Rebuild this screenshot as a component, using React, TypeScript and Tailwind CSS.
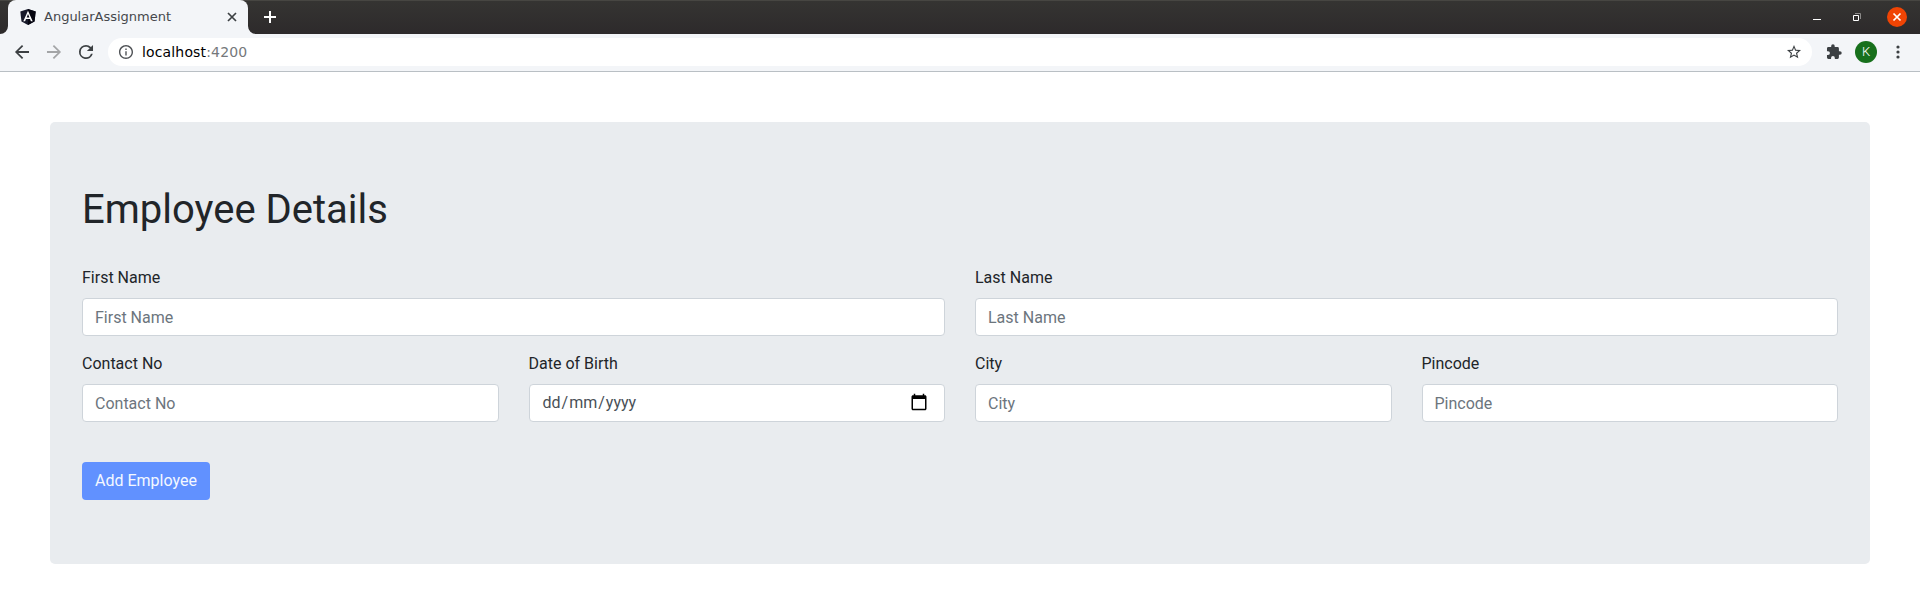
import React from "react";

function AngularLogo() {
  return (
    <svg width="16" height="16" viewBox="0 0 16 16">
      <path d="M8 0 .3 2.600l1.200 9.800L8 16l6.500-3.600 1.200-9.800z" fill="#17192a" />
      <path d="M8 0v16l6.500-3.600 1.200-9.800z" fill="#050510" />
      <path d="M8 1.800 3.300 12.200h1.800l.9-2.300h4l.9 2.300h1.800zm0 3.300 1.400 3.400H6.600z" fill="#fff" />
    </svg>
  );
}

function Icon({ d, className, size = 20, viewBox = "0 0 24 24" }: { d: string; className?: string; size?: number; viewBox?: string }) {
  return (
    <svg width={size} height={size} viewBox={viewBox} fill="currentColor" className={className}>
      <path d={d} />
    </svg>
  );
}

const BACK = "M20 11H7.830l5.590-5.590L12 4l-8 8 8 8 1.410-1.410L7.830 13H20v-2z";
const FORWARD = "M12 4l-1.410 1.410L16.170 11H4v2h12.170l-5.580 5.590L12 20l8-8z";
const RELOAD =
  "M17.650 6.350A7.958 7.958 0 0 0 12 4a8 8 0 1 0 7.730 10h-2.080A6 6 0 1 1 12 6c1.660 0 3.140.690 4.220 1.780L13 11h7V4l-2.350 2.350z";
const INFO =
  "M11 7h2v2h-2zm0 4h2v6h-2zm1-9C6.480 2 2 6.480 2 12s4.480 10 10 10 10-4.480 10-10S17.520 2 12 2zm0 18c-4.410 0-8-3.590-8-8s3.590-8 8-8 8 3.590 8 8-3.590 8-8 8z";
const STAR =
  "M22 9.240l-7.190-.620L12 2 9.190 8.630 2 9.240l5.460 4.730L5.820 21 12 17.270 18.180 21l-1.630-7.030L22 9.240zM12 15.400l-3.760 2.270 1-4.280-3.320-2.880 4.380-.380L12 6.100l1.710 4.040 4.380.380-3.320 2.880 1 4.280L12 15.400z";
const PUZZLE =
  "M20.500 11H19V7a2 2 0 0 0-2-2h-4V3.500a2.500 2.500 0 0 0-5 0V5H4a2 2 0 0 0-1.990 2v3.800H3.500a2.700 2.700 0 0 1 0 5.400H2V20a2 2 0 0 0 2 2h3.800v-1.500a2.700 2.700 0 0 1 5.400 0V22H17a2 2 0 0 0 2-2v-4h1.500a2.500 2.500 0 0 0 0-5z";
const CALENDAR =
  "M20 3h-1V1h-2v2H7V1H5v2H4c-1.100 0-2 .9-2 2v16c0 1.100.9 2 2 2h16c1.100 0 2-.9 2-2V5c0-1.100-.9-2-2-2zm0 18H4V8h16v13z";

const NAV_BOX = "0.600 0.600 22.800 22.800";
const SMALL_BOX = "0.600 0.600 22.800 22.800";

function TabStrip() {
  return (
    <div className="flex h-[34px] items-end border-t border-[#474642] bg-linear-to-b from-[#353432] to-[#2d2a2b]">
      <svg width="8" height="33" viewBox="0 0 8 33">
        <path d="M8 25v8H0a8 8 0 0 0 8-8z" fill="#f3f5f8" />
      </svg>
      <div className="-mt-px flex h-[34px] w-[240px] items-center rounded-t-lg bg-[#f3f5f8] pl-3 pr-[11px]">
        <AngularLogo />
        <span className="ml-2 flex-1 font-['DejaVu_Sans',sans-serif] text-[13px] leading-4 text-[#45484c]">AngularAssignment</span>
        <svg width="10" height="10" viewBox="0 0 10 10" stroke="#3c4043" strokeWidth="1.700">
          <path d="M1 1l8 8M9 1l-8 8" />
        </svg>
      </div>
      <svg width="8" height="33" viewBox="0 0 8 33">
        <path d="M0 25v8h8a8 8 0 0 1-8-8z" fill="#f3f5f8" />
      </svg>
      <svg className="mb-[11px] ml-2" width="12" height="12" viewBox="0 0 12 12" stroke="#fff" strokeWidth="2">
        <path d="M6 0v12M0 6h12" />
      </svg>
      <div className="flex h-full flex-1 items-center justify-end pb-px pr-[13px]">
        <svg width="8" height="12" viewBox="0 0 8 12">
          <path d="M0 8h8v1H0z" fill="#fff" />
        </svg>
        <svg className="ml-8" width="8" height="8" viewBox="0 0 8 8" fill="none">
          <path d="M2 .5h5.500V6" stroke="#8b8a89" />
          <path d="M.5 2.500h5v5h-5z" stroke="#fff" />
        </svg>
        <svg className="ml-[26px]" width="20" height="20" viewBox="0 0 20 20">
          <circle cx="10" cy="10" r="10" fill="#f04404" />
          <path d="M6.500 6.500l7 7m0-7l-7 7" stroke="#fff" strokeWidth="1.700" />
        </svg>
      </div>
    </div>
  );
}

function Toolbar() {
  return (
    <div className="flex h-[38px] items-center border-b border-[#b9bfc4] bg-[#f3f5f8] pb-px text-[#3c4043]">
      <Icon d={BACK} viewBox={NAV_BOX} className="ml-3" />
      <Icon d={FORWARD} viewBox={NAV_BOX} className="ml-3 text-[#a3a5a7]" />
      <Icon d={RELOAD} viewBox={NAV_BOX} className="ml-3" />
      <div className="ml-3 flex h-7 flex-1 items-center rounded-full bg-white pl-[10px] pr-[10px]">
        <Icon d={INFO} size={16} viewBox={SMALL_BOX} className="text-[#505357]" />
        <span className="ml-2 font-['DejaVu_Sans',sans-serif] text-[14px] leading-5 tracking-[0.150px] text-black">
          localhost<span className="text-[#75787b]">:4200</span>
        </span>
        <Icon d={STAR} size={16} viewBox={SMALL_BOX} className="ml-auto" />
      </div>
      <Icon d={PUZZLE} size={16} viewBox={SMALL_BOX} className="ml-[14px]" />
      <div className="ml-[13px] flex size-[22px] items-center justify-center rounded-full bg-[#17701c] font-['Roboto',sans-serif] text-[13px] font-light text-white">
        K
      </div>
      <svg className="ml-[19px] mr-5" width="4" height="14" viewBox="0 0 4 14" fill="#3c4043">
        <circle cx="2" cy="2" r="1.600" />
        <circle cx="2" cy="7" r="1.600" />
        <circle cx="2" cy="12" r="1.600" />
      </svg>
    </div>
  );
}

function Field({ label, date = false }: { label: string; date?: boolean }) {
  return (
    <label className="flex min-w-0 flex-col gap-2">
      <span>{label}</span>
      {date ? (
        <div className="flex h-[38px] items-center justify-between rounded border border-[#ced4da] bg-white pl-3 pr-4 text-[#495057]">
          <span className="flex">
            <span className="px-px">dd</span>/<span className="px-px">mm</span>/<span className="px-px">yyyy</span>
          </span>
          <Icon d={CALENDAR} size={18} className="mb-0.5 text-black" />
        </div>
      ) : (
        <input
          placeholder={label}
          className="h-[38px] w-full rounded border border-[#ced4da] bg-white px-3 text-[#495057] placeholder:text-[#6c757d]"
        />
      )}
    </label>
  );
}

export default function App() {
  return (
    <div className="h-[599px] overflow-hidden bg-white">
      <TabStrip />
      <Toolbar />
      <main className="p-[50px] font-['Roboto',sans-serif] text-base leading-6 text-[#212529]">
        <section className="rounded-[5px] bg-[#e9ecef] px-8 py-16">
          <h1 className="mb-8 text-[40px] leading-[48px]">Employee Details</h1>
          <div className="grid grid-cols-2 gap-[30px]">
            <Field label="First Name" />
            <Field label="Last Name" />
          </div>
          <div className="mt-4 grid grid-cols-4 gap-[30px]">
            <Field label="Contact No" />
            <Field label="Date of Birth" date />
            <Field label="City" />
            <Field label="Pincode" />
          </div>
          <button className="mt-10 block h-[38px] rounded bg-[#6191ff] px-[13px] text-[#f4f8ff]">Add Employee</button>
        </section>
      </main>
    </div>
  );
}
